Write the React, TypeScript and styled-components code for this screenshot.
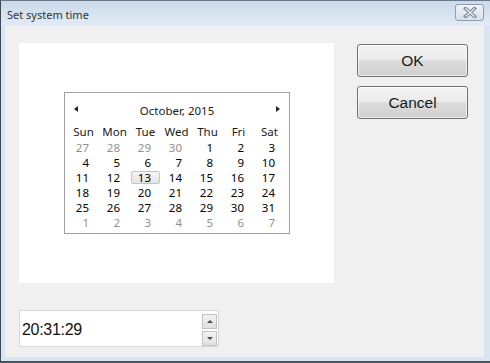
import { FC } from "react";
import styled, { createGlobalStyle } from "styled-components";

const GlobalStyle = createGlobalStyle`
  html, body {
    margin: 0;
    padding: 0;
    background: #f0f0f0;
  }
  * {
    box-sizing: border-box;
  }
`;

const uiFont = `"Noto Sans", "Open Sans", sans-serif`;
const classicFont = `"Liberation Sans", Arial, sans-serif`;

const weekDays = ["Sun", "Mon", "Tue", "Wed", "Thu", "Fri", "Sat"];

// October 2015 grid, with the trailing days of the months around it
const days: { n: number; muted?: boolean; selected?: boolean }[] = [
  { n: 27, muted: true },
  { n: 28, muted: true },
  { n: 29, muted: true },
  { n: 30, muted: true },
  ...Array.from({ length: 31 }, (_, i) => ({ n: i + 1, selected: i + 1 === 13 })),
  ...Array.from({ length: 7 }, (_, i) => ({ n: i + 1, muted: true })),
];

const App: FC = () => {
  return (
    <>
      <GlobalStyle />
      <Window>
        <TitleBar>
          <Title>Set system time</Title>
          <CloseButton aria-label="close">
            <svg width="14" height="11" viewBox="0 0 14 11">
              <path d="M2.5 1.5 L11.5 9.5 M11.5 1.5 L2.5 9.5" stroke="#77869a" strokeWidth="3.4" strokeLinecap="square" />
              <path d="M2.8 1.8 L11.2 9.2 M11.2 1.8 L2.8 9.2" stroke="#f5f7fa" strokeWidth="1.3" strokeLinecap="square" />
            </svg>
          </CloseButton>
        </TitleBar>
        <Client>
          <LeftColumn>
            <Panel>
              <Calendar>
                <MonthRow>
                  <Arrow direction="left" />
                  <MonthTitle>October, 2015</MonthTitle>
                  <Arrow direction="right" />
                </MonthRow>
                <Grid>
                  {weekDays.map((d) => (
                    <WeekDay key={d}>{d}</WeekDay>
                  ))}
                  {days.map((d, i) => (
                    <Day key={i} muted={d.muted} selected={d.selected}>
                      {d.n}
                    </Day>
                  ))}
                </Grid>
              </Calendar>
            </Panel>
            <TimeEdit>
              <TimeText>20:31:29</TimeText>
              <Spinner>
                <SpinButton>
                  <SpinArrow up />
                </SpinButton>
                <SpinButton>
                  <SpinArrow />
                </SpinButton>
              </Spinner>
            </TimeEdit>
          </LeftColumn>
          <ButtonColumn>
            <PushButton>OK</PushButton>
            <PushButton>Cancel</PushButton>
          </ButtonColumn>
        </Client>
      </Window>
    </>
  );
};

const Window = styled.div`
  width: 490px;
  height: 363px;
  display: flex;
  flex-direction: column;
  background: #dae5f2;
  border-left: 1px solid #3f4a57;
  border-top: 1px solid #6a7a8c;
  border-bottom: 2px solid #4b5560;
  overflow: hidden;
`;

const TitleBar = styled.div`
  height: 25px;
  flex: none;
  display: flex;
  align-items: flex-start;
  justify-content: space-between;
  padding: 0 6px 0 6px;
  background: linear-gradient(#cbd9ea, #dbe6f2 70%, #e2eaf5);
`;

const Title = styled.span`
  font-family: ${uiFont};
  font-size: 11px;
  line-height: 27px;
  color: #333;
`;

const CloseButton = styled.div`
  width: 29px;
  height: 17px;
  margin-top: 3px;
  border: 1px solid #8e9db0;
  border-radius: 3px;
  background: linear-gradient(#f1f4f8, #e3e9f1 50%, #d6dfea);
  display: flex;
  align-items: center;
  justify-content: center;
`;

const Client = styled.div`
  flex: 1;
  display: flex;
  align-items: flex-start;
  margin: 0 6px 4px 4px;
  padding: 17px 0 0 14px;
  background: #f0f0f0;
`;

const LeftColumn = styled.div`
  display: flex;
  flex-direction: column;
  gap: 27px;
`;

const Panel = styled.div`
  width: 315px;
  height: 240px;
  background: #ffffff;
  padding: 49px 0 0 45px;
`;

const Calendar = styled.div`
  width: 226px;
  height: 142px;
  border: 1px solid #a0a0a0;
  background: #ffffff;
  padding: 6px 4px 0 3px;
  font-family: ${uiFont};
  font-size: 11.5px;
  color: #000;
`;

const MonthRow = styled.div`
  height: 22px;
  display: flex;
  align-items: center;
  justify-content: space-between;
  padding: 0 5px 0 6px;
`;

const MonthTitle = styled.span`
  color: #1a1a1a;
`;

const Arrow = styled.span<{ direction: "left" | "right" }>`
  width: 0;
  height: 0;
  margin-top: -3px;
  border-top: 3.5px solid transparent;
  border-bottom: 3.5px solid transparent;
  ${(props) =>
    props.direction === "left"
      ? "border-right: 4px solid #222;"
      : "border-left: 4px solid #222;"}
`;

const Grid = styled.div`
  display: grid;
  grid-template-columns: repeat(7, 31px);
  grid-template-rows: 16px repeat(6, 15px);
  margin-top: 3px;
`;

const WeekDay = styled.div`
  text-align: center;
  line-height: 16px;
  color: #1a1a1a;
`;

const Day = styled.div<{ muted?: boolean; selected?: boolean }>`
  text-align: right;
  line-height: 13px;
  padding-right: 9px;
  margin: 1px 1px 1px 1px;
  color: ${(props) => (props.muted ? "#8f8f8f" : "#000")};
  ${(props) =>
    props.selected &&
    `border: 1px solid #c4c4c4;
    border-radius: 2px;
    padding-right: 8px;
    line-height: 11px;
    background: linear-gradient(#f4f4f4, #e4e4e4);`}
`;

const TimeEdit = styled.div`
  width: 200px;
  height: 37px;
  background: #ffffff;
  border: 1px solid #d9d9d9;
  display: flex;
  align-items: center;
  justify-content: space-between;
  padding: 0 1px 0 2px;
`;

const TimeText = styled.span`
  font-family: ${classicFont};
  font-size: 16px;
  letter-spacing: -0.3px;
  color: #111;
  margin-top: 2px;
`;

const Spinner = styled.div`
  display: flex;
  flex-direction: column;
  gap: 2px;
  margin-top: 2px;
`;

const SpinButton = styled.div`
  width: 15px;
  height: 15px;
  border: 1px solid #c2c2c2;
  background: linear-gradient(#f2f2f2, #e0e0e0);
  display: flex;
  align-items: center;
  justify-content: center;
`;

const SpinArrow = styled.span<{ up?: boolean }>`
  width: 0;
  height: 0;
  border-left: 3px solid transparent;
  border-right: 3px solid transparent;
  ${(props) =>
    props.up
      ? "border-bottom: 3px solid #4a4a4a;"
      : "border-top: 3px solid #4a4a4a;"}
`;

const ButtonColumn = styled.div`
  display: flex;
  flex-direction: column;
  gap: 9px;
  margin-left: 23px;
  margin-top: 1px;
`;

const PushButton = styled.div`
  width: 111px;
  height: 33px;
  border: 1px solid #707070;
  border-radius: 3px;
  background: linear-gradient(#f2f2f2 0%, #ebebeb 48%, #dddddd 50%, #cfcfcf 100%);
  box-shadow: inset 0 0 0 1px rgba(255, 255, 255, 0.6);
  display: flex;
  align-items: center;
  justify-content: center;
  font-family: ${classicFont};
  font-size: 15.5px;
  color: #1a1a1a;
`;

export default App;
